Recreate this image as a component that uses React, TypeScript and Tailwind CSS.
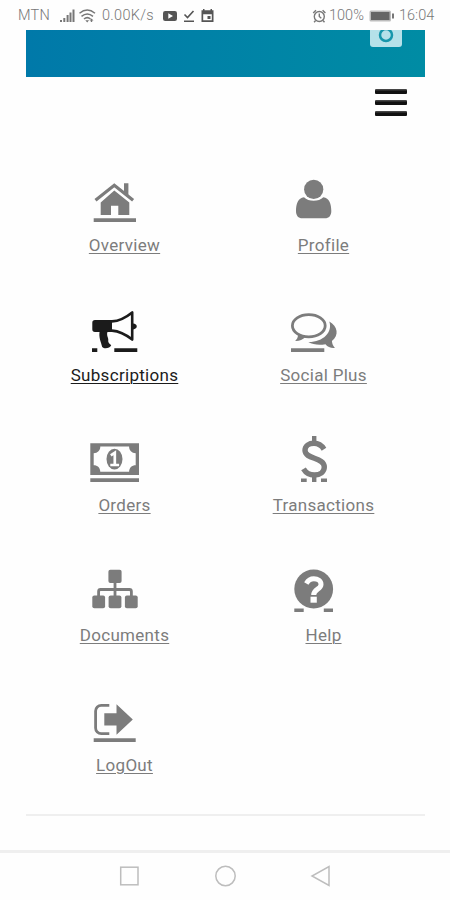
import React from 'react';

interface MenuItem {
  label: string;
  icon: React.ReactNode;
  active?: boolean;
}

const menuItems: MenuItem[] = [
  {
    label: 'Overview',
    icon: (
      <>
        <path d="M36 7.3h4.4v13l-4.4-4z" />
        <path d="M7.5 24.3L26.3 9.2l18.8 15.1" fill="none" stroke="currentColor" strokeWidth="3.2" />
        <path d="M26.3 14.6L41.3 26.5V39h-11V29.7H23V39H12.7V26.5z" />
        <path d="M5.7 42.2H48v3.8H5.7z" />
      </>
    ),
  },
  {
    label: 'Profile',
    icon: (
      <>
        <circle cx="26.7" cy="13.4" r="9.6" />
        <path d="M17 21.300c4.500 4.700 14.800 4.700 19.300 0 6 .6 8 7 8 13.700 0 4.700-2.300 7.300-6.300 7.300H15.300C11.300 42.300 9 39.700 9 35c0-6.700 2-13.100 8-13.700z" />
      </>
    ),
  },
  {
    label: 'Subscriptions',
    active: true,
    icon: (
      <>
        <path d="M7 14h17v12H7a2.700 2.700 0 0 1-2.700-2.700v-6.600A2.700 2.700 0 0 1 7 14z" />
        <path d="M24 15.400c8-.5 14-4 20.200-9v27.200c-6.200-5-12.200-8.500-20.200-9" fill="none" stroke="currentColor" strokeWidth="2.6" strokeLinejoin="round" />
        <path d="M45 17.600c5 .2 5 5.600 0 5.800z" />
        <path d="M11.600 25.500h8c-1 2.500-.3 4.500.4 6.500.7 2.200-.2 3 .6 4.600.6 1.200 1.600 1.700 2.600 2.600-1 2.800-6.600 4.200-9 1.800-1.400-5.500-3.600-9.500-2.600-15.500z" />
        <path d="M4 42.300h5.300V46H4zM26.300 42.300h23V46h-23z" />
      </>
    ),
  },
  {
    label: 'Social Plus',
    icon: (
      <>
        <ellipse cx="21.8" cy="19.8" rx="16.4" ry="11.1" fill="none" stroke="currentColor" strokeWidth="2.8" />
        <path d="M11 28.500c0 3-1 4.500-2.800 6.500 4 .2 7.500-1.200 10-3.800z" />
        <path d="M42.300 15.500c8.500 5 10 13.500 2.600 19.500.3 2.800 1 4.700 3 7-4 .4-7.200-1-9.400-3.800-6.500 1.200-12.500.5-17.200-2.200 14.500.3 24.700-9.500 21-20.500z" />
        <path d="M4 42.200h33.300V46H4z" />
      </>
    ),
  },
  {
    label: 'Orders',
    icon: (
      <>
        <path fillRule="evenodd" d="M2.300 7.300H51V39H2.300zM12.300 10.600c0 4-2.700 6.600-6.600 6.600v12c3.900 0 6.600 2.600 6.600 6.600h28.800c0-4 2.700-6.600 6.600-6.600v-12c-3.900 0-6.600-2.600-6.600-6.600z" />
        <ellipse cx="26.5" cy="23.1" rx="8" ry="10.3" />
        <path d="M22.800 19.300l4-2.600v12.200M22.300 29h8.800" fill="none" stroke="white" strokeWidth="2.7" />
        <path d="M2.300 42.200H51V46H2.300z" />
      </>
    ),
  },
  {
    label: 'Transactions',
    icon: (
      <>
        <path d="M25 0h4.400v6H25zM25 39.500h4.400V46H25z" />
        <path d="M37 13.200C34.700 9.500 31 7.300 27 7.300c-5 0-9 2.700-9 7 0 9.500 19.300 6.500 19.300 16.700 0 5-4.300 8-9.800 8-4.800 0-8.500-2-11-6.200" fill="none" stroke="currentColor" strokeWidth="5.4" />
        <path d="M14 42.600h5.700V46H14zM34 42.600h6V46h-6z" />
      </>
    ),
  },
  {
    label: 'Documents',
    icon: (
      <>
        <rect x="20.4" y="3.7" width="13.2" height="13.2" rx="2" />
        <path d="M27 16v14M10.600 30v-4.500a2 2 0 0 1 2-2h28.800a2 2 0 0 1 2 2V30" fill="none" stroke="currentColor" strokeWidth="2.8" />
        <rect x="4.3" y="29.5" width="12.8" height="12.8" rx="2" />
        <rect x="20.6" y="29.5" width="12.8" height="12.8" rx="2" />
        <rect x="36.9" y="29.5" width="12.8" height="12.8" rx="2" />
      </>
    ),
  },
  {
    label: 'Help',
    icon: (
      <>
        <circle cx="26.7" cy="23" r="19.4" />
        <path d="M19.300 17.500c1.800-3 4.200-4.700 7.500-4.700 4 0 7.200 2.200 7.200 5.600 0 5-7.300 4.600-7.300 10.600" fill="none" stroke="white" strokeWidth="5" />
        <path d="M23.500 30.700h6.300v6h-6.300z" fill="white" />
        <path d="M7.300 42.400h9.400V46H7.300zM36.800 42.400H46V46h-9.200z" />
      </>
    ),
  },
  {
    label: 'LogOut',
    icon: (
      <>
        <path d="M21.300 9.400h-8a5.700 5.700 0 0 0-5.700 5.700v16.800a5.700 5.700 0 0 0 5.700 5.700h8" fill="none" stroke="currentColor" strokeWidth="2.8" />
        <path d="M16.300 17.300h12.200V8.200l16.300 15.200L28.500 38.700v-9.100H16.300z" />
        <path d="M5.700 42.300h42V46h-42z" />
      </>
    ),
  },
];

const StatusBar = () => (
  <div className="flex h-[30px] shrink-0 items-center pt-[2px] pl-[18px] pr-[14px] text-[#777777]">
    <span className="w-[42px] text-[14.5px] font-light tracking-[0.2px]">MTN</span>
    <svg className="h-4 w-[37px]" viewBox="0 0 37 16" fill="currentColor">
      <path d="M0 12h2v2H0zM3.300 10h2v4h-2zM6.600 7h2v7h-2zM9.500 4.500h2V14h-2zM12.500 1.500h2V14h-2z" />
      <path d="M19.500 5.300c5-4.200 10.500-4.200 15.500 0M21.500 8.300c3.700-3 7.800-3 11.500 0M24 11c2-1.700 4.500-1.700 6.500 0" fill="none" stroke="currentColor" strokeWidth="1.5" />
      <path d="M25.300 12.300h3.800l-1.900 2.200zM31.500 10.500l2 2h-1.300V14h-1.400v-1.500h-1.300z" />
    </svg>
    <span className="ml-[5px] w-[60px] text-[14.5px] font-light tracking-[0.3px]">0.00K/s</span>
    <svg className="h-4 w-[54px] text-[#555555]" viewBox="0 0 54 16" fill="currentColor">
      <rect x="1" y="3" width="14" height="10" rx="2.2" />
      <path d="M6.300 5.300v5.400L11 8z" fill="white" />
      <path d="M22.500 6.500l3 3 6-6.500M22 13.200h10" fill="none" stroke="currentColor" strokeWidth="1.6" />
      <path fillRule="evenodd" d="M41 1h1.500v1.300h6V1H50v1.300h1.500V14H39.500V2.300H41zM41.200 6.300v6h8.600v-6zM45.500 8h3v3h-3z" />
    </svg>
    <svg className="ml-auto h-4 w-[15px]" viewBox="0 0 15 16" fill="none" stroke="currentColor" strokeWidth="1.4">
      <circle cx="7.3" cy="8.5" r="5" />
      <path d="M7.300 5.500v3l2 1.700M1.200 5L4 2.200M10.600 2.200L13.400 5M3.600 12.500l-1.500 1.800M11 12.500l1.500 1.800" />
    </svg>
    <span className="ml-[2px] w-[37px] text-[14.5px] font-light">100%</span>
    <svg className="ml-[3px] h-4 w-[26px]" viewBox="0 0 26 16">
      <rect x="0.5" y="2.5" width="21.5" height="11" rx="1.5" fill="#bdbdbd" />
      <rect x="2" y="4" width="18.5" height="8" fill="#666666" />
      <rect x="23" y="5.5" width="2" height="5" fill="#777777" />
    </svg>
    <span className="ml-[4px] w-[37px] text-[14.5px] font-light">16:04</span>
  </div>
);

const MenuLink = ({ label, icon, active }: MenuItem) => (
  <a className={active ? 'flex h-[130px] flex-col items-center text-[#1b1b1b]' : 'flex h-[130px] flex-col items-center text-[#7c7c7c]'}>
    <svg className="mr-5 h-[47px] w-[54px]" viewBox="0 0 54 47" fill="currentColor">
      {icon}
    </svg>
    <span className="mt-3 text-[17px] leading-5 tracking-[0.3px] underline decoration-1 underline-offset-2">
      {label}
    </span>
  </a>
);

const App = () => {
  return (
    <div className="flex h-[900px] w-[450px] flex-col overflow-hidden bg-[#fefefe] font-['Roboto',sans-serif]">
      <StatusBar />
      <div className="mr-[25px] ml-[26px] flex h-[47px] shrink-0 justify-end bg-linear-to-r from-[#0079a9] to-[#008ca4] pr-[23px]">
        <svg className="h-[17px] w-[32px]" viewBox="0 0 32 17">
          <path d="M0 0h32v14a3 3 0 0 1-3 3H3a3 3 0 0 1-3-3z" fill="#b5e1e9" />
          <circle cx="16" cy="5" r="6" fill="none" stroke="#1696ab" strokeWidth="2.5" />
        </svg>
      </div>
      <div className="mt-[12px] mr-[43px] flex h-[27px] w-[32px] shrink-0 flex-col justify-between self-end">
        <div className="h-[5px] rounded-[1px] bg-linear-to-b from-[#555555] via-[#111111] to-[#111111]" />
        <div className="h-[5px] rounded-[1px] bg-linear-to-b from-[#555555] via-[#111111] to-[#111111]" />
        <div className="h-[5px] rounded-[1px] bg-linear-to-b from-[#555555] via-[#111111] to-[#111111]" />
      </div>
      <nav className="mt-[60px] ml-[25px] grid h-[630px] w-[398px] shrink-0 auto-rows-[130px] grid-cols-2">
        {menuItems.map(item => (
          <MenuLink key={item.label} {...item} />
        ))}
      </nav>
      <div className="mt-auto mr-[25px] mb-[34px] ml-[26px] h-[2px] shrink-0 bg-[#efefef]" />
      <div className="flex h-[50px] shrink-0 items-center justify-center border-t-[3px] border-[#efefef] pb-px text-[#bdbdbd]">
        <svg className="h-[22px] w-[212px]" viewBox="0 0 212 22" fill="none" stroke="currentColor" strokeWidth="1.5">
          <rect x="1.7" y="2.2" width="17.3" height="17.6" />
          <circle cx="106.5" cy="11" r="9.7" />
          <path d="M210 1.500v19L193 11z" />
        </svg>
      </div>
    </div>
  );
};

export default App;
